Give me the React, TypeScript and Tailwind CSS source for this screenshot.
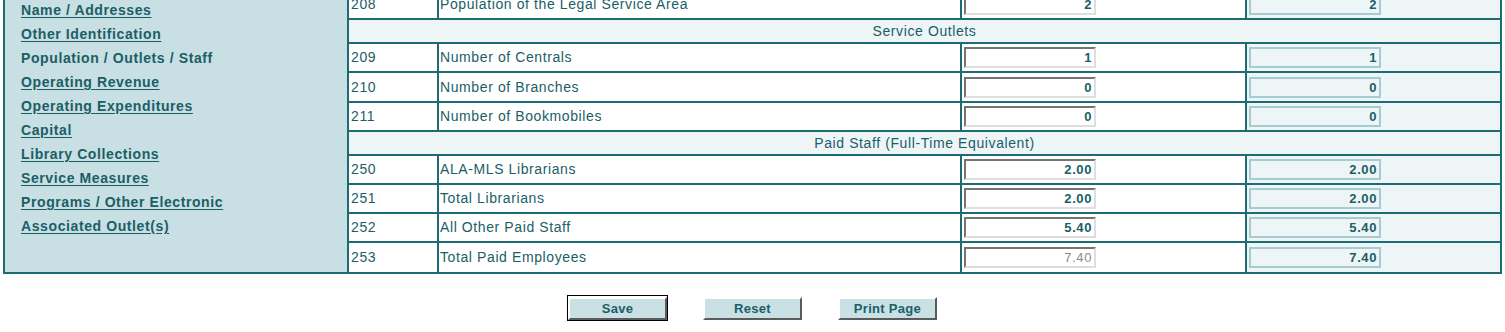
const navLinks = [
  { label: "Name / Addresses", active: false },
  { label: "Other Identification", active: false },
  { label: "Population / Outlets / Staff", active: true },
  { label: "Operating Revenue", active: false },
  { label: "Operating Expenditures", active: false },
  { label: "Capital", active: false },
  { label: "Library Collections", active: false },
  { label: "Service Measures", active: false },
  { label: "Programs / Other Electronic", active: false },
  { label: "Associated Outlet(s)", active: false },
];

type Row =
  | { kind: "header"; title: string }
  | { kind: "data"; code: string; label: string; value: string; prior: string; readOnly?: boolean; tall?: boolean };

const rows: Row[] = [
  { kind: "data", code: "208", label: "Population of the Legal Service Area", value: "2", prior: "2" },
  { kind: "header", title: "Service Outlets" },
  { kind: "data", code: "209", label: "Number of Centrals", value: "1", prior: "1" },
  { kind: "data", code: "210", label: "Number of Branches", value: "0", prior: "0", tall: true },
  { kind: "data", code: "211", label: "Number of Bookmobiles", value: "0", prior: "0" },
  { kind: "header", title: "Paid Staff (Full-Time Equivalent)" },
  { kind: "data", code: "250", label: "ALA-MLS Librarians", value: "2.00", prior: "2.00" },
  { kind: "data", code: "251", label: "Total Librarians", value: "2.00", prior: "2.00" },
  { kind: "data", code: "252", label: "All Other Paid Staff", value: "5.40", prior: "5.40" },
  { kind: "data", code: "253", label: "Total Paid Employees", value: "7.40", prior: "7.40", readOnly: true },
];

const Button = ({ label, focused = false }: { label: string; focused?: boolean }) => (
  <div className={focused ? "border border-black" : "border border-transparent"}>
    <button className="w-[99px] h-[23px] bg-[#c9e0e4] border-2 border-t-white border-l-white border-r-[#5a5a5a] border-b-[#5a5a5a] text-[13px] font-bold text-[#1b5e66] leading-none tracking-[0.3px]">
      {label}
    </button>
  </div>
);

export default function App() {
  return (
    <div className="w-[1505px] h-[332px] overflow-hidden bg-white font-['Liberation_Sans',Arial,sans-serif] text-[#1b5e66]">
      <div className="-mt-[11px]">
        <div className="ml-[3px] w-[1499px] flex border-2 border-[#1d6b73]">
          {/* NAV */}
          <div className="w-[344px] shrink-0 bg-[#c8dfe3] border-r-2 border-[#1d6b73] pl-[16px] pt-[7px]">
            {navLinks.map((link) => (
              <div key={link.label} className="h-[24px] leading-[24px] text-[14px] font-bold tracking-[0.6px]">
                {link.active ? (
                  <span>{link.label}</span>
                ) : (
                  <a href="#" className="underline underline-offset-2">
                    {link.label}
                  </a>
                )}
              </div>
            ))}
          </div>

          {/* TABLE */}
          <div className="flex-1 flex flex-col text-[14px] tracking-[0.6px]">
            {rows.map((row, i) => {
              const last = i === rows.length - 1;
              if (row.kind === "header") {
                return (
                  <div
                    key={row.title}
                    className="h-[24px] border-b-2 border-[#1d6b73] bg-[#edf5f6] flex items-center justify-center"
                  >
                    {row.title}
                  </div>
                );
              }
              return (
                <div
                  key={row.code}
                  className={`${row.tall ? "h-[30px]" : "h-[29px]"} flex ${last ? "" : "border-b-2 border-[#1d6b73]"}`}
                >
                  <div className="w-[90px] border-r-2 border-[#1d6b73] bg-white pl-[2px] flex items-center">
                    {row.code}
                  </div>
                  <div className="w-[523px] border-r-2 border-[#1d6b73] bg-white pl-[1px] flex items-center">
                    {row.label}
                  </div>
                  <div className="w-[285px] border-r-2 border-[#1d6b73] bg-white pl-[2px] flex items-center">
                    <input
                      readOnly
                      value={row.value}
                      className={`w-[132px] h-[21px] bg-white border-2 border-t-[#747474] border-l-[#747474] border-r-[#dedede] border-b-[#dedede] text-right pr-[2px] text-[13px] font-bold outline-none ${
                        row.readOnly ? "text-[#8a8a8a] font-normal" : "text-[#1b5e66]"
                      }`}
                    />
                  </div>
                  <div className="flex-1 bg-[#edf5f6] pl-[2px] flex items-center">
                    <input
                      readOnly
                      value={row.prior}
                      className="w-[132px] h-[21px] bg-[#edf5f6] border-2 border-[#a6ccd2] text-right pr-[2px] text-[13px] font-bold text-[#1b5e66] outline-none"
                    />
                  </div>
                </div>
              );
            })}
          </div>
        </div>

        {/* BUTTONS */}
        <div className="mt-[21px] flex justify-center gap-[34px]">
          <Button label="Save" focused />
          <Button label="Reset" />
          <Button label="Print Page" />
        </div>
      </div>
    </div>
  );
}
